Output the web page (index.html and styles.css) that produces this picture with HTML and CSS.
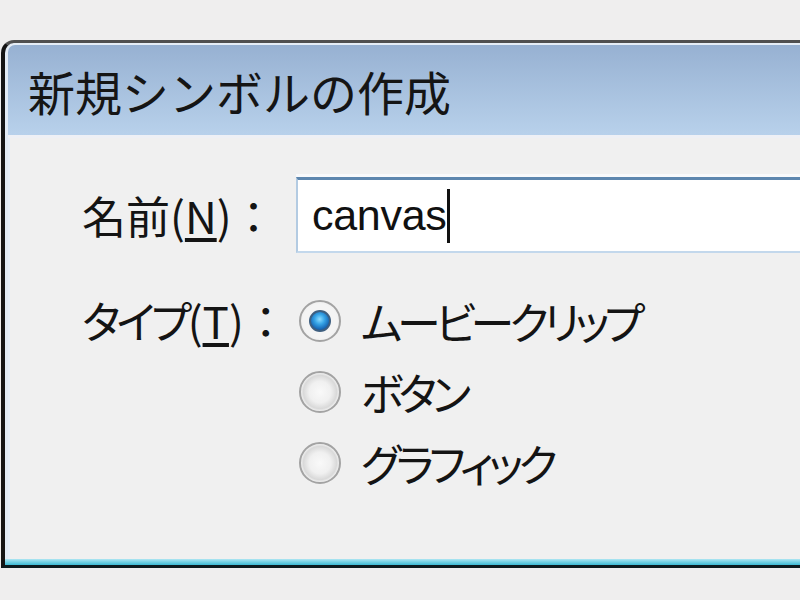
FILE: index.html
```html
<!DOCTYPE html>
<html lang="ja">
<head>
<meta charset="utf-8">
<title>新規シンボルの作成</title>
<link rel="stylesheet" href="styles.css">
</head>
<body>
<div class="window">
  <div class="frame">
    <div class="titlebar">新規シンボルの作成</div>
    <div class="content">
      <div class="row">
        <div class="label">名前(<span class="key">N</span>)：</div>
        <div class="input"><span class="value">canvas</span><span class="caret"></span></div>
      </div>
      <div class="row type-row">
        <div class="label"><span class="kana">タイプ</span>(<span class="key">T</span>)：</div>
        <div class="radios">
          <div class="radio-item"><span class="radio checked"><span class="dot"></span></span><span class="radio-text">ムービークリップ</span></div>
          <div class="radio-item"><span class="radio"></span><span class="radio-text">ボタン</span></div>
          <div class="radio-item"><span class="radio"></span><span class="radio-text">グラフィック</span></div>
        </div>
      </div>
    </div>
    <div class="bottom-glow"></div>
  </div>
</div>
</body>
</html>
```
FILE: styles.css
```css
html, body {
  margin: 0;
  padding: 0;
  width: 800px;
  height: 600px;
  overflow: hidden;
  background: #efeeee;
}
body {
  font-family: "Noto Sans CJK JP", "Noto Sans", sans-serif;
  color: #141414;
}
.window {
  margin: 40px 0 0 1px;
  width: 900px;
  border-left: 4px solid #141414;
  border-top: 3px solid #505050;
  border-bottom: 3px solid #0c1a1e;
  border-top-left-radius: 13px;
  background: #e2ebf5;
}
.frame {
  margin-left: 3px;
  padding-top: 2px;
  border-top-left-radius: 9px;
  background: #f0f0f0;
  display: flex;
  flex-direction: column;
  box-shadow: inset 2px 2px 0 #e6eef7;
}
.titlebar {
  height: 90px;
  display: flex;
  align-items: center;
  padding-left: 20px;
  font-size: 47px;
  line-height: 1;
  color: #151515;
  background: linear-gradient(#97b1d2, #b8d1eb);
  border-bottom: 3px solid #eef0f5;
  border-top-left-radius: 7px;
}
.content {
  height: 421px;
  padding: 39px 0 0 74px;
  box-sizing: border-box;
  display: flex;
  flex-direction: column;
  gap: 32px;
}
.row {
  display: grid;
  grid-template-columns: 214px 1fr;
  align-items: center;
}
.type-row {
  align-items: start;
}
.label {
  font-size: 44px;
  line-height: 1;
  white-space: nowrap;
}
.kana {
  font-feature-settings: "palt";
  letter-spacing: -4px;
}
.type-row .label {
  margin-top: 13px;
}
.key {
  text-decoration: underline;
  text-underline-offset: 4px;
}
.input {
  height: 76px;
  box-sizing: border-box;
  border-top: 3px solid #5d86ae;
  border-left: 2px solid #b3cbe2;
  border-bottom: 2px solid #c3d8ec;
  background: #fff;
  display: flex;
  align-items: center;
  padding-left: 14px;
  box-shadow: 0 -3px 0 #f8f9fb;
}
.value {
  font-family: "Liberation Sans", Arial, sans-serif;
  font-size: 43px;
  color: #111;
  letter-spacing: -0.3px;
}
.caret {
  width: 3px;
  height: 54px;
  background: #111;
  margin-left: 1px;
}
.radios {
  display: flex;
  flex-direction: column;
  padding-left: 3px;
}
.radio-item {
  height: 71px;
  display: flex;
  align-items: center;
  gap: 20px;
}
.radio {
  width: 42px;
  height: 42px;
  box-sizing: border-box;
  border-radius: 50%;
  border: 2px solid #a3a3a3;
  background: radial-gradient(circle at 50% 50%, #f9f9f9 0, #f0f0f0 40%, #d9d9d9 62%, #f4f4f4 72%, #e7e7e7 100%);
  display: flex;
  align-items: center;
  justify-content: center;
  flex: none;
}
.radio.checked {
  background: radial-gradient(circle at 50% 50%, #f4f4f4 0, #f4f4f4 62%, #e4e4e4 100%);
}
.dot {
  width: 22px;
  height: 22px;
  border-radius: 50%;
  box-sizing: border-box;
  border: 2px solid #3e5f80;
  background: radial-gradient(circle at 48% 40%, #8fdcff 0, #36a4e6 35%, #1766b4 70%, #0e3f7a 100%);
}
.radio-text {
  font-size: 44px;
  line-height: 1;
  font-feature-settings: "palt";
  letter-spacing: -5px;
  white-space: nowrap;
}
.bottom-glow {
  height: 6px;
  margin-left: -3px;
  background: linear-gradient(#aee6f2, #3bbad4);
}
```
